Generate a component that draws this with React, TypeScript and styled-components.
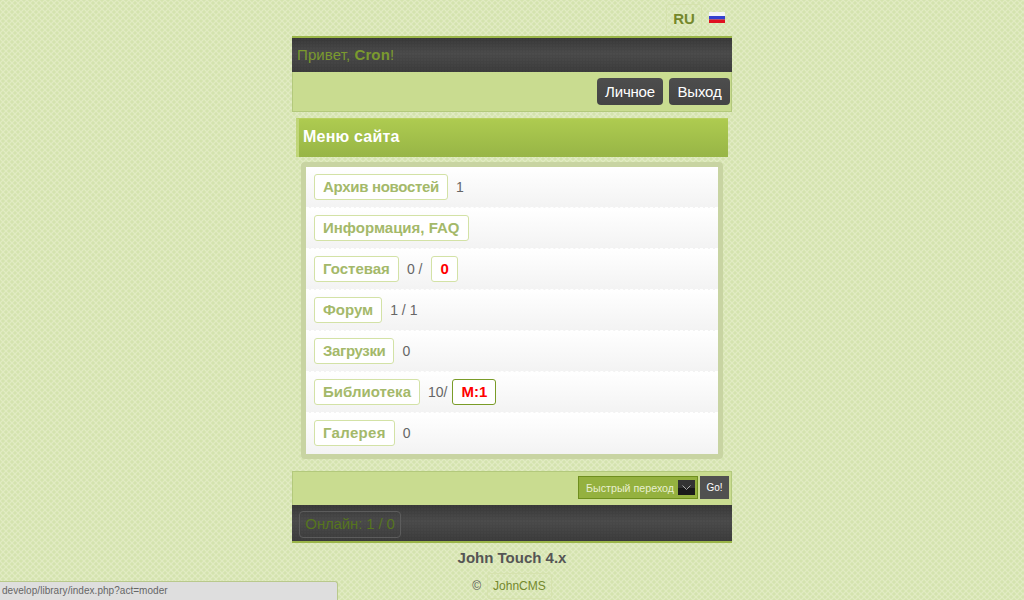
import React from "react";
import styled, { createGlobalStyle } from "styled-components";

const Global = createGlobalStyle`
  html, body { margin: 0; padding: 0; height: 100%; overflow: hidden; }
  body {
    font-family: "Liberation Sans", Arial, sans-serif;
    font-size: 14px;
    color: #555;
    background-color: #e1ebc2;
    background-image:
      radial-gradient(circle at 3px 3px, #d4e3ae 1.3px, transparent 2px),
      radial-gradient(circle at 0 0, #d4e3ae 1.3px, transparent 2px),
      radial-gradient(circle at 6px 6px, #d4e3ae 1.3px, transparent 2px),
      radial-gradient(circle at 6px 0, #d4e3ae 1.3px, transparent 2px),
      radial-gradient(circle at 0 6px, #d4e3ae 1.3px, transparent 2px);
    background-size: 6px 6px;
  }
`;

const Page = styled.div`
  width: 440px;
  margin: 0 auto;
`;

const LangRow = styled.div`
  height: 36px;
  display: flex;
  justify-content: flex-end;
  align-items: flex-start;
  padding: 4px 7px 0 0;
  box-sizing: border-box;
  gap: 7px;
`;

const LangBox = styled.div`
  width: 36px;
  height: 29px;
  box-sizing: border-box;
  border: 1px solid #d6e2ae;
  border-radius: 3px;
  padding-bottom: 1px;
  display: flex;
  align-items: center;
  justify-content: center;
  font-weight: bold;
  font-size: 15px;
  color: #74882c;
`;

const Flag = styled.svg`
  width: 16px;
  height: 11px;
  margin-top: 8px;
`;

const DarkBar = styled.div<{ $edge: "top" | "bottom"; $h: number }>`
  height: ${(p) => p.$h}px;
  box-sizing: border-box;
  display: flex;
  align-items: center;
  ${(p) => (p.$edge === "top" ? "border-top: 2px solid #9ab548;" : "border-bottom: 2px solid #9ab548;")}
  background-color: #3f3f3f;
  background-image:
    radial-gradient(circle at 1px 1px, rgba(255,255,255,.015) 1px, transparent 1.2px),
    linear-gradient(#373737, #494949 45%, #3a3a3a);
  background-size: 3px 3px, 100% 100%;
`;

const Greeting = styled.div`
  padding: 0 0 2px 5px;
  font-size: 15px;
  letter-spacing: 0.1px;
  color: #7b9a2e;
  b { color: #7b9a2e; }
`;

const LightBar = styled.div<{ $h: number }>`
  height: ${(p) => p.$h}px;
  box-sizing: border-box;
  background: #c9dc90;
  border: 1px solid #b3c97c;
  display: flex;
  justify-content: flex-end;
  align-items: flex-start;
`;

const NavRow = styled(LightBar)`
  border-top: 0;
  padding: 6px 1px 0 0;
  gap: 6px;
`;

const DarkButton = styled.div<{ $w: number }>`
  width: ${(p) => p.$w}px;
  height: 27px;
  border-radius: 4px;
  background: linear-gradient(#4d4d4d, #444);
  color: #fff;
  font-size: 15px;
  letter-spacing: -0.2px;
  display: flex;
  align-items: center;
  justify-content: center;
`;

const Title = styled.div`
  margin: 6px 4px 5px;
  height: 39px;
  box-sizing: border-box;
  padding: 0 0 2px 4px;
  border-left: 3px solid #c0d678;
  border-top: 1px solid #b8d060;
  background: linear-gradient(#aecb50, #97b546);
  color: #fff;
  font-weight: bold;
  font-size: 16px;
  letter-spacing: 0.2px;
  display: flex;
  align-items: center;
`;

const ListFrame = styled.div`
  margin: 0 9px;
  border: 5px solid #c8d4a2;
  border-radius: 4px;
  background: #fff;
`;

const Row = styled.div<{ $last?: boolean }>`
  height: 41px;
  box-sizing: border-box;
  padding: 7px 0 0 8px;
  display: flex;
  align-items: flex-start;
  gap: 8px;
  background-color: #f3f3f3;
  background-image: linear-gradient(#fff, #f3f3f3);
  background-repeat: no-repeat;
  ${(p) => (p.$last ? "" : "border-bottom: 1px dashed #fff;")}
`;

const Tag = styled.div<{ $alert?: boolean; $track?: number }>`
  height: 26px;
  box-sizing: border-box;
  padding: 0 8px 2px;
  margin-left: ${(p) => (p.$alert ? "-3px" : "0")};
  border: 1px solid ${(p) => (p.$alert ? "#7a9c28" : "#d3e2a6")};
  border-radius: 3px;
  background: #fff;
  display: flex;
  align-items: center;
  font-weight: bold;
  font-size: 15px;
  letter-spacing: ${(p) => p.$track ?? 0}px;
  color: #a4b96a;
`;

const GuestBadge = styled(Tag)`
  margin-left: 1px;
`;

const Red = styled.span`
  color: #f00;
`;

const Count = styled.span`
  line-height: 26px;
  font-size: 14px;
  color: #666;
`;

const BottomBar = styled(LightBar)`
  margin-top: 12px;
  padding: 4px 2px 0 0;
  gap: 2px;
  border-bottom: 0;
`;

const Jump = styled.div`
  width: 120px;
  height: 23px;
  box-sizing: border-box;
  border: 1px solid #6f8f1e;
  background: #94b13f;
  color: #e8efd0;
  font-size: 10.7px;
  display: flex;
  align-items: center;
  justify-content: space-between;
  padding: 0 2px 0 7px;
`;

const Caret = styled.div`
  width: 17px;
  height: 15px;
  background: linear-gradient(#333 50%, #1a1a1a 50%);
  display: flex;
  align-items: center;
  justify-content: center;
`;

const Go = styled.div`
  width: 29px;
  height: 23px;
  background: #505050;
  color: #fff;
  font-size: 10px;
  display: flex;
  align-items: center;
  justify-content: center;
`;

const Online = styled.div`
  margin-left: 7px;
  margin-top: 2px;
  width: 102px;
  height: 27px;
  box-sizing: border-box;
  border: 1px solid #5c5c5c;
  border-radius: 4px;
  padding-bottom: 2px;
  color: #56751e;
  font-size: 15px;
  letter-spacing: -0.15px;
  display: flex;
  align-items: center;
  justify-content: center;
`;

const Brand = styled.div`
  margin-top: 6px;
  text-align: center;
  font-weight: bold;
  font-size: 15px;
  line-height: 17px;
  color: #555;
`;

const Copy = styled.div`
  margin-top: 7px;
  display: flex;
  justify-content: center;
  align-items: center;
  gap: 6px;
  font-size: 12px;
  color: #555;
`;

const CopyLink = styled.div`
  height: 26px;
  box-sizing: border-box;
  padding: 0 5px;
  border: 1px solid #d6e2ae;
  border-radius: 3px;
  display: flex;
  align-items: center;
  color: #74882c;
`;

const Status = styled.div`
  position: fixed;
  left: 0;
  bottom: 0;
  width: 338px;
  height: 19px;
  box-sizing: border-box;
  padding-left: 2px;
  background: #dedede;
  border: 1px solid #b9c98c;
  border-left: 0;
  border-bottom: 0;
  border-top-right-radius: 3px;
  font-size: 10px;
  letter-spacing: 0.04px;
  line-height: 18px;
  color: #666;
`;

export default function App() {
  return (
    <>
      <Global />
      <Page>
        <LangRow>
          <LangBox>RU</LangBox>
          <Flag viewBox="0 0 16 11">
            <rect width="16" height="4" fill="#f4f4f8" />
            <rect y="4" width="16" height="3.5" fill="#3340d0" />
            <rect y="7.5" width="16" height="3.5" fill="#e01020" />
          </Flag>
        </LangRow>
        <DarkBar $edge="top" $h={36}>
          <Greeting>Привет, <b>Cron</b>!</Greeting>
        </DarkBar>
        <NavRow $h={40}>
          <DarkButton $w={66}>Личное</DarkButton>
          <DarkButton $w={61}>Выход</DarkButton>
        </NavRow>
        <Title>Меню сайта</Title>
        <ListFrame>
          <Row><Tag $track={-0.3}>Архив новостей</Tag><Count>1</Count></Row>
          <Row><Tag>Информация, FAQ</Tag></Row>
          <Row><Tag>Гостевая</Tag><Count>0 /</Count><GuestBadge><Red>0</Red></GuestBadge></Row>
          <Row><Tag>Форум</Tag><Count>1 / 1</Count></Row>
          <Row><Tag $track={-0.35}>Загрузки</Tag><Count>0</Count></Row>
          <Row><Tag>Библиотека</Tag><Count>10/</Count><Tag $alert><Red>М:1</Red></Tag></Row>
          <Row $last><Tag $track={0.3}>Галерея</Tag><Count>0</Count></Row>
        </ListFrame>
        <BottomBar $h={34}>
          <Jump>
            Быстрый переход
            <Caret>
              <svg width="9" height="5" viewBox="0 0 9 5">
                <path d="M0.5 0.5 L4.5 4.5 L8.5 0.5" fill="none" stroke="#aaa" strokeWidth="1" />
              </svg>
            </Caret>
          </Jump>
          <Go>Go!</Go>
        </BottomBar>
        <DarkBar $edge="bottom" $h={38}>
          <Online>Онлайн: 1 / 0</Online>
        </DarkBar>
        <Brand>John Touch 4.x</Brand>
        <Copy>©<CopyLink>JohnCMS</CopyLink></Copy>
      </Page>
      <Status>develop/library/index.php?act=moder</Status>
    </>
  );
}
